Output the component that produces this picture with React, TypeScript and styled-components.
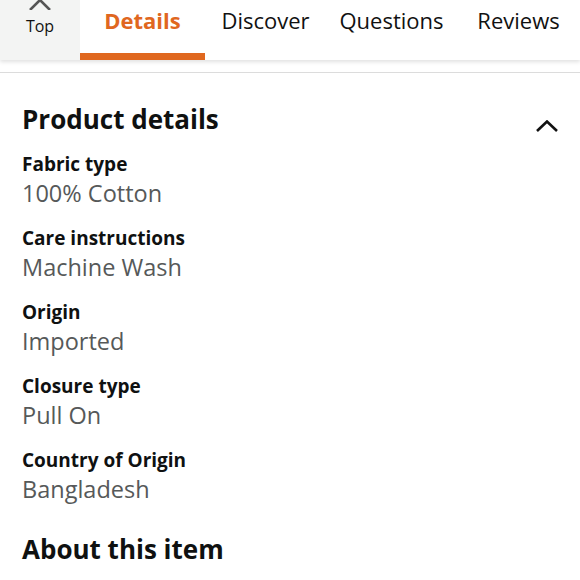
import React from 'react';
import styled, { createGlobalStyle } from 'styled-components';

const GlobalStyle = createGlobalStyle`
  body {
    margin: 0;
    background: #fff;
    font-family: "Open Sans", "Noto Sans", Arial, sans-serif;
  }
`;

const Page = styled.div`
  width: 580px;
  height: 580px;
  overflow: hidden;
  background: #fff;
`;

const Header = styled.div`
  display: flex;
  height: 60px;
  background: #fff;
  box-shadow: 0 2px 4px rgba(0, 0, 0, 0.12);
  position: relative;
`;

const TopTab = styled.div`
  width: 80px;
  background: #f3f4f3;
  display: flex;
  flex-direction: column;
  align-items: center;
  color: #111;
  font-size: 16px;
`;

const TopLabel = styled.span`
  margin-top: 6px;
  line-height: 20px;
`;

const Tab = styled.div<{ $active?: boolean; $width: number }>`
  width: ${(p) => p.$width}px;
  display: flex;
  justify-content: center;
  padding-top: 6px;
  box-sizing: border-box;
  font-size: 22px;
  line-height: 28px;
  font-weight: ${(p) => (p.$active ? 700 : 400)};
  color: ${(p) => (p.$active ? '#e0671f' : '#111')};
  border-bottom: 7px solid ${(p) => (p.$active ? '#e0681f' : 'transparent')};
`;

const Rule = styled.div`
  height: 1px;
  background: #dcdcdc;
  margin-top: 12px;
`;

const Section = styled.div`
  padding: 28px 22px 0;
`;

const TitleRow = styled.div`
  display: flex;
  justify-content: space-between;
  align-items: center;
`;

const Title = styled.h2`
  margin: 0;
  font-size: 26px;
  line-height: 36px;
  font-weight: 700;
  color: #0f1111;
`;

const Chevron = styled.svg`
  margin-top: 14px;
`;

const DetailList = styled.div`
  display: flex;
  flex-direction: column;
  gap: 16px;
  margin-top: 14px;
`;

const Item = styled.div`
  display: flex;
  flex-direction: column;
`;

const Label = styled.div`
  font-size: 19px;
  line-height: 26px;
  font-weight: 700;
  color: #0f1111;
`;

const Value = styled.div`
  font-size: 23.5px;
  line-height: 32px;
  color: #565959;
`;

const SubTitle = styled(Title)`
  margin-top: 26px;
`;

const details = [
  { label: 'Fabric type', value: '100% Cotton' },
  { label: 'Care instructions', value: 'Machine Wash' },
  { label: 'Origin', value: 'Imported' },
  { label: 'Closure type', value: 'Pull On' },
  { label: 'Country of Origin', value: 'Bangladesh' },
];

const tabs = [
  { name: 'Details', width: 125, active: true },
  { name: 'Discover', width: 121 },
  { name: 'Questions', width: 131 },
  { name: 'Reviews', width: 123 },
];

export default function App() {
  return (
    <Page>
      <GlobalStyle />
      <Header>
        <TopTab>
          <svg width="22" height="10" viewBox="0 0 22 10">
            <polyline points="1,10 11,0 21,10" fill="none" stroke="#555" strokeWidth="2.6" />
          </svg>
          <TopLabel>Top</TopLabel>
        </TopTab>
        {tabs.map((t) => (
          <Tab key={t.name} $active={t.active} $width={t.width}>
            {t.name}
          </Tab>
        ))}
      </Header>
      <Rule />
      <Section>
        <TitleRow>
          <Title>Product details</Title>
          <Chevron width="22" height="12" viewBox="0 0 22 12">
            <polyline points="1,11 11,1.5 21,11" fill="none" stroke="#111" strokeWidth="2.6" />
          </Chevron>
        </TitleRow>
        <DetailList>
          {details.map((d) => (
            <Item key={d.label}>
              <Label>{d.label}</Label>
              <Value>{d.value}</Value>
            </Item>
          ))}
        </DetailList>
        <SubTitle>About this item</SubTitle>
      </Section>
    </Page>
  );
}
